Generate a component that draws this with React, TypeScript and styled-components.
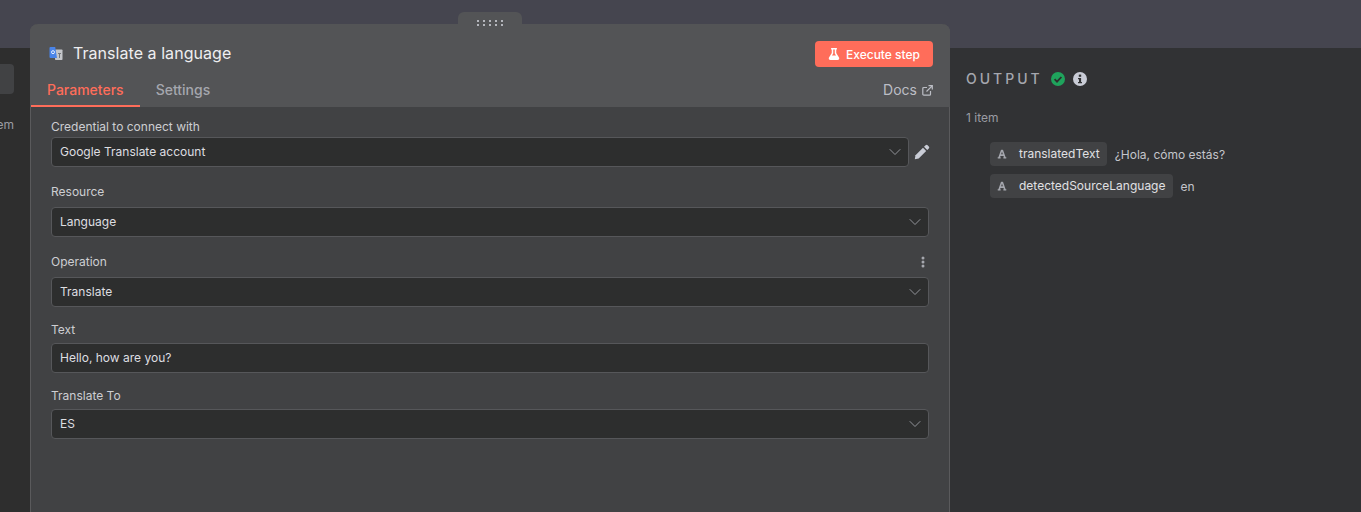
import React from 'react';
import styled, { createGlobalStyle } from 'styled-components';
import { ChevronDown } from 'lucide-react';
import { FaFlask, FaFont } from 'react-icons/fa';

const Global = createGlobalStyle`
  html, body { margin: 0; padding: 0; height: 100%; overflow: hidden; background: #2e2e2e; }
  body { font-family: Inter, "Liberation Sans", sans-serif; }
  #root { height: 100%; }
  * { box-sizing: border-box; }
`;

const Page = styled.div`
  width: 1361px;
  height: 512px;
  overflow: hidden;
  display: flex;
  flex-direction: column;
`;
const TopBand = styled.div`
  height: 48px;
  flex: none;
  background: #45454f;
`;
const Columns = styled.div`
  flex: 1;
  display: flex;
  min-height: 0;
`;
const InputColumn = styled.div`
  width: 30px;
  flex: none;
  background: #2e2e2e;
  padding-top: 16px;
  display: flex;
  flex-direction: column;
  align-items: flex-end;
`;
const InputStub = styled.div`
  width: 14px;
  height: 30px;
  margin-right: 16px;
  background: #414244;
  border-radius: 0 4px 4px 0;
`;
const InputText = styled.div`
  margin: 23px 16px 0 0;
  font-size: 12px;
  line-height: 16px;
  color: #9a9ca3;
`;
const Panel = styled.section`
  position: relative;
  width: 920px;
  flex: none;
  margin-top: -24px;
  height: 488px;
  background: #414244;
  border-left: 1px solid #5a5a5c;
  border-right: 1px solid #5a5a5c;
  border-radius: 8px 8px 0 0;
  display: flex;
  flex-direction: column;
`;
const Handle = styled.div`
  position: absolute;
  left: 427px;
  top: -12px;
  width: 64px;
  height: 14px;
  background: #535456;
  border-radius: 6px 6px 0 0;
  display: flex;
  justify-content: center;
  align-items: center;
  padding-top: 8px;
`;
const Grip = styled.span`
  display: grid;
  grid-template-columns: repeat(5, 2px);
  gap: 2px 4px;
`;
const Dot = styled.span`
  width: 2px;
  height: 2px;
  background: #b4b6bc;
`;
const PanelHead = styled.header`
  height: 83px;
  flex: none;
  background: #535456;
  border-radius: 8px 8px 0 0;
  margin: 0 -1px;
  display: flex;
  flex-direction: column;
`;
const TitleRow = styled.div`
  display: flex;
  align-items: center;
  height: 43px;
  padding: 17px 17px 0 18px;
`;
const Title = styled.h1`
  margin: -2px 0 0 9px;
  font-size: 16px;
  line-height: 24px;
  font-weight: 400;
  letter-spacing: 0.05px;
  color: #eeeef0;
  flex: 1;
`;
const RunButton = styled.button`
  width: 118px;
  height: 26px;
  border: none;
  border-radius: 4px;
  background: #ff6d5a;
  color: #fff;
  font: 500 12px Inter, sans-serif;
  display: flex;
  align-items: center;
  justify-content: center;
  gap: 6px;
  padding: 0;
`;
const TabRow = styled.nav`
  display: flex;
  height: 40px;
  align-items: flex-end;
  padding: 0 17px 0 1px;
`;
const Tab = styled.div<{ $active?: boolean }>`
  height: 40px;
  padding: 13px 16px 0;
  font-size: 14px;
  line-height: 20px;
  font-weight: 500;
  color: ${p => (p.$active ? '#ff6d5a' : '#a5a7ae')};
  border-bottom: 2px solid ${p => (p.$active ? '#ff6d5a' : 'transparent')};
`;
const Docs = styled.div`
  margin-left: auto;
  height: 40px;
  padding-top: 13px;
  display: flex;
  align-items: flex-start;
  gap: 5px;
  font-size: 14px;
  line-height: 20px;
  font-weight: 400;
  color: #bcbec5;
`;
const DocsIcon = styled.svg`
  margin-top: 5px;
`;
const Form = styled.div`
  padding: 12px 20px 0;
  display: flex;
  flex-direction: column;
`;
const Field = styled.div<{ $after: number }>`
  margin-bottom: ${p => p.$after}px;
`;
const LabelRow = styled.div<{ $below: number }>`
  display: flex;
  justify-content: space-between;
  align-items: center;
  height: 16px;
  margin-bottom: ${p => p.$below}px;
`;
const Label = styled.label`
  font-size: 12px;
  line-height: 16px;
  color: #cdced2;
`;
const InputRow = styled.div`
  display: flex;
  align-items: center;
`;
const Box = styled.div<{ $narrow?: boolean }>`
  width: ${p => (p.$narrow ? 858 : 878)}px;
  flex: none;
  height: 30px;
  background: #2d2e2e;
  border: 1px solid #56575a;
  border-radius: 4px;
  padding: 0 3px 1px 8px;
  display: flex;
  align-items: center;
  justify-content: space-between;
  font-size: 12px;
  color: #dedee1;
`;
const ChevronSlot = styled.span`
  display: flex;
  margin-top: 1px;
`;
const EditButton = styled.svg`
  margin-left: 5px;
  flex: none;
`;
const Kebab = styled.svg`
  margin-right: 4px;
`;
const Output = styled.aside`
  flex: 1;
  background: #313234;
  padding: 23px 16px 0;
`;
const OutputHead = styled.div`
  display: flex;
  align-items: center;
  height: 16px;
`;
const OutputTitle = styled.h2`
  margin: 0 8px 0 0;
  font-size: 14px;
  line-height: 16px;
  font-weight: 500;
  letter-spacing: 3px;
  color: #a5a7ae;
`;
const Info = styled.svg`
  margin-left: 8px;
`;
const Count = styled.div`
  margin-top: 23px;
  font-size: 12px;
  line-height: 16px;
  color: #9a9ca3;
`;
const Tree = styled.div`
  margin: 16px 0 0 24px;
  display: flex;
  flex-direction: column;
  gap: 8px;
`;
const TreeRow = styled.div`
  display: flex;
  align-items: center;
  gap: 7.5px;
`;
const Key = styled.div`
  height: 24px;
  background: #414244;
  border-radius: 4px;
  padding: 0 7.5px 1px 7px;
  display: flex;
  align-items: center;
  font-size: 12px;
  color: #e0e0e3;
`;
const TypeGlyph = styled.span`
  display: flex;
  width: 22px;
  color: #a5a7ae;
`;
const Value = styled.span`
  font-size: 12px;
  color: #c4c5cb;
`;

const Translate = () => (
  <svg width="16" height="14" viewBox="0 0 16 14">
    <rect x="7" y="2.5" width="7.5" height="10.5" rx="0.8" fill="#c4c6ca" />
    <path d="M10 6.5h3M11.5 6v5" stroke="#75777b" strokeWidth="1" />
    <path d="M2.5 0h4.7l1.8 11H2.5a1 1 0 0 1-1-1V1a1 1 0 0 1 1-1z" fill="#4a84e8" />
    <circle cx="5" cy="5.2" r="1.5" fill="none" stroke="#e6eeff" strokeWidth="1" />
  </svg>
);

const Chevron = () => (
  <ChevronSlot>
    <ChevronDown size={20} strokeWidth={1} color="#a5a7ae" />
  </ChevronSlot>
);

type SelectProps = { label: string; value: string; below: number; after: number };

const SelectField = ({ label, value, below, after }: SelectProps) => (
  <Field $after={after}>
    <LabelRow $below={below}><Label>{label}</Label></LabelRow>
    <Box>{value}<Chevron /></Box>
  </Field>
);

export default function App() {
  return (
    <Page>
      <Global />
      <TopBand />
      <Columns>
        <InputColumn>
          <InputStub />
          <InputText>em</InputText>
        </InputColumn>
        <Panel>
          <Handle>
            <Grip>
              {Array.from({ length: 10 }).map((_, i) => <Dot key={i} />)}
            </Grip>
          </Handle>
          <PanelHead>
            <TitleRow>
              <Translate />
              <Title>Translate a language</Title>
              <RunButton><FaFlask size={12} />Execute step</RunButton>
            </TitleRow>
            <TabRow>
              <Tab $active>Parameters</Tab>
              <Tab>Settings</Tab>
              <Docs>
                Docs
                <DocsIcon width="11" height="11" viewBox="0 0 11 11" fill="none" stroke="#bcbec5" strokeWidth="1.2">
                  <path d="M8.5 6v3.2a1 1 0 0 1-1 1H1.8a1 1 0 0 1-1-1V3.5a1 1 0 0 1 1-1H5M6.5 .7h3.8v3.8M10.2 .8L4.5 6.5" />
                </DocsIcon>
              </Docs>
            </TabRow>
          </PanelHead>
          <Form>
            <Field $after={17}>
              <LabelRow $below={2}><Label>Credential to connect with</Label></LabelRow>
              <InputRow>
                <Box $narrow>Google Translate account<Chevron /></Box>
                <EditButton width="16" height="16" viewBox="0 0 16 16" fill="#c9ccd6">
                  <path d="M0.8 15.2l.7-3.9L9 3.8l3.2 3.2-7.5 7.5z" />
                  <path d="M10 2.8l1.6-1.6a1.4 1.4 0 0 1 2 0l1.2 1.2a1.4 1.4 0 0 1 0 2L13.2 6z" />
                </EditButton>
              </InputRow>
            </Field>
            <SelectField label="Resource" value="Language" below={7} after={17} />
            <Field $after={15}>
              <LabelRow $below={7}>
                <Label>Operation</Label>
                <Kebab width="4" height="12" viewBox="0 0 4 12" fill="#a5a7ae">
                  <circle cx="2" cy="2" r="1.5" /><circle cx="2" cy="6" r="1.5" /><circle cx="2" cy="10" r="1.5" />
                </Kebab>
              </LabelRow>
              <Box>Translate<Chevron /></Box>
            </Field>
            <Field $after={15}>
              <LabelRow $below={5}><Label>Text</Label></LabelRow>
              <Box>Hello, how are you?</Box>
            </Field>
            <SelectField label="Translate To" value="ES" below={5} after={0} />
          </Form>
        </Panel>
        <Output>
          <OutputHead>
            <OutputTitle>OUTPUT</OutputTitle>
            <svg width="14" height="14" viewBox="0 0 14 14">
              <circle cx="7" cy="7" r="7" fill="#1fa35c" />
              <path d="M3.6 7.2l2.4 2.4 4.4-4.6" fill="none" stroke="#2d2e2e" strokeWidth="1.8" />
            </svg>
            <Info width="14" height="14" viewBox="0 0 14 14">
              <circle cx="7" cy="7" r="7" fill="#c9ccd6" />
              <rect x="5.8" y="2.6" width="2.4" height="2.2" fill="#313234" />
              <path d="M5 6h3.1v4H9v1.2H5V10h1V7.2H5z" fill="#313234" />
            </Info>
          </OutputHead>
          <Count>1 item</Count>
          <Tree>
            <TreeRow>
              <Key><TypeGlyph><FaFont size={10} /></TypeGlyph>translatedText</Key>
              <Value>¿Hola, cómo estás?</Value>
            </TreeRow>
            <TreeRow>
              <Key><TypeGlyph><FaFont size={10} /></TypeGlyph>detectedSourceLanguage</Key>
              <Value>en</Value>
            </TreeRow>
          </Tree>
        </Output>
      </Columns>
    </Page>
  );
}
